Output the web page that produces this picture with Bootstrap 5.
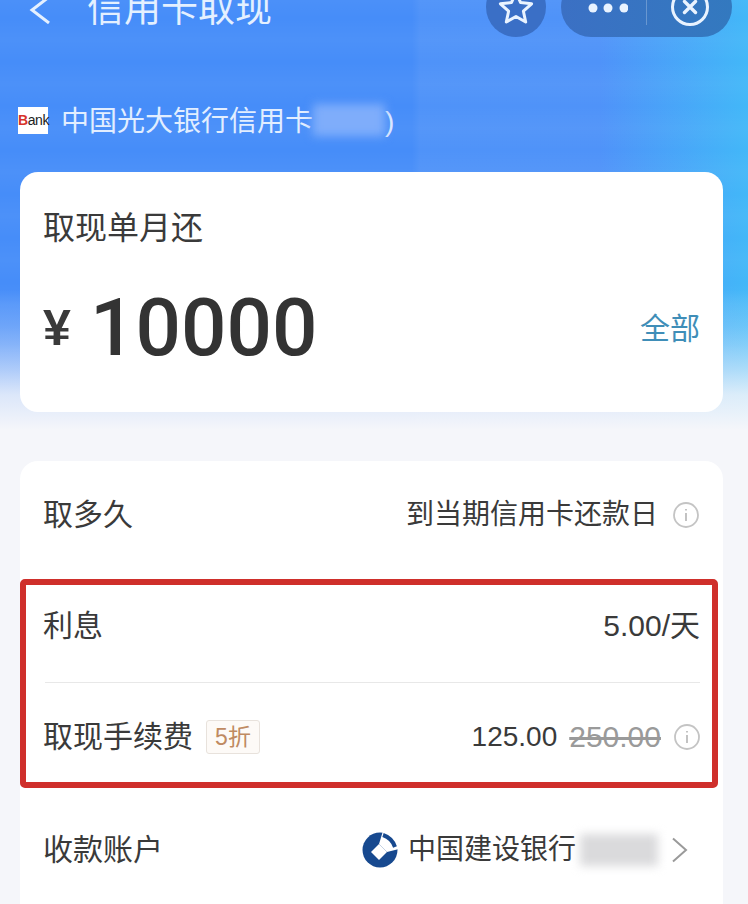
<!DOCTYPE html>
<html lang="zh-CN">
<head>
  <meta charset="UTF-8">
  <title>信用卡取现</title>
  <link rel="stylesheet" href="https://cdn.jsdelivr.net/npm/bootstrap@5.3.0/dist/css/bootstrap.min.css">
  <style>
    html, body { height: 100%; overflow: hidden; }
    body {
      font-family: "Liberation Sans", "Noto Sans CJK SC", sans-serif;
      color: #3a3a3a;
      background: #f5f6fa;
    }
    .screen {
      height: 904px;
      overflow: hidden;
      background:
        linear-gradient(180deg, rgba(245,246,250,0) 290px, rgba(245,246,250,.35) 345px, rgba(245,246,250,.85) 395px, #f5f6fa 430px),
        repeating-linear-gradient(180deg, rgba(255,255,255,.035) 40px, rgba(255,255,255,0) 62px, rgba(255,255,255,.035) 84px),
        linear-gradient(90deg, rgba(64,190,248,0) 600px, rgba(64,190,248,.85) 748px),
        linear-gradient(90deg, rgba(255,255,255,0) 412px, rgba(255,255,255,.05) 420px),
        #468df9;
    }
    .topbar { height: 60px; margin-top: -23px; padding: 0 16px 0 29px; }
    .back-icon { width: 22px; height: 28px; margin-top: 6px; }
    .page-title { font-size: 37px; line-height: 60px; color: #e4f0ff; margin-left: 36px; padding-top: 3px; height: 60px; }
    .fav-btn { width: 60px; height: 60px; border-radius: 50%; background: #3a6fc6; padding-top: 2px; }
    .capsule { width: 171px; height: 60px; border-radius: 30px; margin-left: 15px; background: linear-gradient(90deg, #3b70c4, #3379bf); }
    .capsule-more { width: 85px; padding-left: 27px; padding-top: 2px; }
    .capsule-line { width: 1px; height: 36px; margin-top: 12px; background: rgba(255,255,255,.25); }
    .bank-row { padding: 69px 0 0 18px; box-sizing: content-box; height: 28px; margin-bottom: 38px; color: #e2eeff; font-size: 28px; line-height: 28px; }
    .bank-logo { width: 30px; height: 27px; background: #fff; color: #222; font-size: 14px; line-height: 27px; margin-right: 13px; letter-spacing: -.4px; white-space: nowrap; }
    .bank-logo b { color: #d8332a; font-weight: 700; }
    .bank-name { padding-top: 3px; }
    .smudge { display: inline-block; filter: blur(5px); }
    .smudge-blue { width: 72px; height: 32px; background: #7fadfb; }
    .smudge-grey { width: 78px; height: 32px; background: #dadadc; margin-left: 4px; margin-right: 13px; }
    .page-pad { padding: 0 25px 0 20px; }
    .amount-card { height: 240px; border-radius: 18px; padding: 36px 23px 0; margin-bottom: 49px; }
    .amount-label { font-size: 32px; line-height: 40px; }
    .amount-row { margin-top: 30px; height: 100px; }
    .yen { font-size: 50px; font-weight: 700; width: 47px; line-height: 100px; }
    .amount-num { font-family: Roboto, sans-serif; font-size: 80px; font-weight: 500; line-height: 100px; color: #333; }
    .all-link { font-size: 30px; color: #3f8eb8; }
    .detail-card { height: 600px; border-radius: 18px; }
    .detail-row { font-size: 30px; line-height: 40px; }
    .first-row { height: 106px; margin-bottom: 12px; padding: 2px 24px 0 23px; }
    .cjk-val { font-size: 28px; }
    .value-group { gap: 15px; }
    .red-frame { height: 209px; width: 698px; border: 6px solid #cf2f2b; border-radius: 5px; padding: 0 12px 0 17px; }
    .frame-top { height: 80px; padding-top: 2px; }
    .frame-line { height: 1px; margin: 17px 0 13px 2px; background: #e8e8e8; }
    .frame-bottom { height: 80px; padding-top: 2px; }
    .off-tag { width: 54px; height: 34px; border: 1px solid #e8e2dc; border-radius: 3px; background: #fdfaf7; color: #bf8a62; font-size: 23px; line-height: 32px; margin-left: 13px; }
    .new-price { font-size: 28px; }
    .old-price { color: #9a9a9a; margin-left: 12px; margin-right: 13px; text-decoration: line-through; }
    .info-icon { width: 26px; height: 26px; }
    .last-row { height: 124px; padding: 0 34px 0 23px; }
    .ccb-logo { width: 36px; height: 36px; margin-right: 10px; }
    .chevron-icon { width: 18px; height: 26px; }
  </style>
</head>
<body>
  <div class="screen">
    <div class="topbar d-flex align-items-center">
      <svg class="back-icon" viewBox="0 0 22 28"><path d="M20 1 L3 14 L20 27" fill="none" stroke="#e4f0ff" stroke-width="3"/></svg>
      <div class="page-title flex-grow-1">信用卡取现</div>
      <div class="fav-btn d-flex align-items-center justify-content-center">
        <svg width="36" height="36" viewBox="0 0 36 36"><path d="M18 2.5 L22.6 12.6 L33.6 13.8 L25.4 21.2 L27.7 32 L18 26.5 L8.3 32 L10.6 21.2 L2.4 13.8 L13.4 12.6 Z" fill="none" stroke="#e9f3ff" stroke-width="3" stroke-linejoin="round"/></svg>
      </div>
      <div class="capsule d-flex">
        <div class="capsule-more d-flex align-items-center">
          <svg width="40" height="10" viewBox="0 0 40 10"><circle cx="5" cy="5" r="4.5" fill="#e9f3ff"/><circle cx="20" cy="5" r="4.5" fill="#e9f3ff"/><circle cx="36" cy="5" r="4.5" fill="#e9f3ff"/></svg>
        </div>
        <div class="capsule-line"></div>
        <div class="flex-grow-1 d-flex align-items-center justify-content-center">
          <svg width="40" height="40" viewBox="0 0 40 40"><circle cx="20" cy="20" r="17.5" fill="none" stroke="#e9f3ff" stroke-width="3"/><path d="M14.5 14.5 L25.5 25.5 M25.5 14.5 L14.5 25.5" stroke="#e9f3ff" stroke-width="3.4" stroke-linecap="round"/></svg>
        </div>
      </div>
    </div>

    <div class="bank-row d-flex align-items-center">
      <span class="bank-logo text-center"><b>B</b>ank</span>
      <span class="bank-name">中国光大银行信用卡</span><span class="smudge smudge-blue"></span><span class="bank-name">)</span>
    </div>

    <div class="page-pad">
      <div class="card border-0 amount-card">
        <div class="amount-label">取现单月还</div>
        <div class="amount-row d-flex align-items-center">
          <span class="yen">¥</span>
          <span class="amount-num flex-grow-1">10000</span>
          <span class="all-link">全部</span>
        </div>
      </div>

      <div class="card border-0 detail-card">
        <div class="detail-row first-row d-flex align-items-center justify-content-between">
          <span>取多久</span>
          <span class="d-flex align-items-center value-group"><span class="cjk-val">到当期信用卡还款日</span>
            <svg class="info-icon" viewBox="0 0 26 26"><circle cx="13" cy="13" r="12" fill="none" stroke="#c4c4c4" stroke-width="1.8"/><path d="M13 11 V19 M13 7 V8.6" stroke="#b4b4b4" stroke-width="1.6"/></svg>
          </span>
        </div>

        <div class="red-frame">
          <div class="detail-row frame-top d-flex align-items-center justify-content-between">
            <span>利息</span>
            <span>5.00/天</span>
          </div>
          <div class="frame-line"></div>
          <div class="detail-row frame-bottom d-flex align-items-center">
            <span>取现手续费</span>
            <span class="off-tag text-center">5折</span>
            <span class="new-price ms-auto">125.00</span>
            <span class="old-price">250.00</span>
            <svg class="info-icon" viewBox="0 0 26 26"><circle cx="13" cy="13" r="12" fill="none" stroke="#c4c4c4" stroke-width="1.8"/><path d="M13 11 V19 M13 7 V8.6" stroke="#b4b4b4" stroke-width="1.6"/></svg>
          </div>
        </div>

        <div class="detail-row last-row d-flex align-items-center">
          <span>收款账户</span>
          <svg class="ccb-logo ms-auto" viewBox="0 0 36 36">
            <circle cx="18" cy="18" r="17.5" fill="#17498f"/>
            <path d="M17 12 L25 20 L17 28 L9 20 Z" fill="#fff"/>
            <path d="M17 12 L21 -1 L37 -1 L37 17 L25 20 Z" fill="#fff"/>
            <path d="M21 3 Q30 6 33 15" fill="none" stroke="#17498f" stroke-width="4"/>
          </svg>
          <span class="cjk-val">中国建设银行</span>
          <span class="smudge smudge-grey"></span>
          <svg class="chevron-icon" viewBox="0 0 18 26"><path d="M2 1.5 L15 13 L2 24.5" fill="none" stroke="#9a9a9a" stroke-width="2"/></svg>
        </div>
      </div>
    </div>
  </div>
  <script src="https://cdn.jsdelivr.net/npm/bootstrap@5.3.0/dist/js/bootstrap.bundle.min.js"></script>
</body>
</html>
